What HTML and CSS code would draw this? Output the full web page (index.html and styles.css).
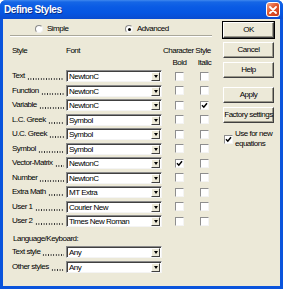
FILE: index.html
```html
<!DOCTYPE html>
<html>
<head>
<meta charset="utf-8">
<link rel="stylesheet" href="styles.css">
</head>
<body>
<div class="win">
  <div class="titlebar">
    <span class="title">Define Styles</span>
    <span class="close"><svg width="8" height="8" viewBox="0 0 8 8"><path d="M1 1L7 7M7 1L1 7" stroke="#fff" stroke-width="1.8" stroke-linecap="round"/></svg></span>
  </div>
  <div class="client">
    <div class="main">
      <div class="radios">
        <span class="radio first"><span class="rb"></span>Simple</span>
        <span class="radio"><span class="rb on"></span>Advanced</span>
      </div>
      <div class="sep"></div>
      <div class="grid head">
        <span>Style</span><span>Font</span><span class="cs">Character Style</span>
      </div>
      <div class="grid sub">
        <span class="c b">Bold</span><span class="c i">Italic</span>
      </div>

      <div class="grid row"><span class="lbl"><span>Text</span><span class="dots"></span></span><span class="combo"><span class="val">NewtonC</span><span class="dd"></span></span><span class="cb b"></span><span class="cb i"></span></div>
      <div class="grid row"><span class="lbl"><span>Function</span><span class="dots"></span></span><span class="combo"><span class="val">NewtonC</span><span class="dd"></span></span><span class="cb b"></span><span class="cb i"></span></div>
      <div class="grid row"><span class="lbl"><span>Variable</span><span class="dots"></span></span><span class="combo"><span class="val">NewtonC</span><span class="dd"></span></span><span class="cb b"></span><span class="cb i"><svg width="7" height="7" viewBox="0 0 7 7"><path d="M1 3.2L2.8 5.2L6 1.2" fill="none" stroke="#000" stroke-width="1.5"/></svg></span></div>
      <div class="grid row"><span class="lbl"><span>L.C. Greek</span><span class="dots"></span></span><span class="combo"><span class="val">Symbol</span><span class="dd"></span></span><span class="cb b"></span><span class="cb i"></span></div>
      <div class="grid row"><span class="lbl"><span>U.C. Greek</span><span class="dots"></span></span><span class="combo"><span class="val">Symbol</span><span class="dd"></span></span><span class="cb b"></span><span class="cb i"></span></div>
      <div class="grid row"><span class="lbl"><span>Symbol</span><span class="dots"></span></span><span class="combo"><span class="val">Symbol</span><span class="dd"></span></span><span class="cb b"></span><span class="cb i"></span></div>
      <div class="grid row"><span class="lbl"><span>Vector-Matrix</span><span class="dots"></span></span><span class="combo"><span class="val">NewtonC</span><span class="dd"></span></span><span class="cb b"><svg width="7" height="7" viewBox="0 0 7 7"><path d="M1 3.2L2.8 5.2L6 1.2" fill="none" stroke="#000" stroke-width="1.5"/></svg></span><span class="cb i"></span></div>
      <div class="grid row"><span class="lbl"><span>Number</span><span class="dots"></span></span><span class="combo"><span class="val">NewtonC</span><span class="dd"></span></span><span class="cb b"></span><span class="cb i"></span></div>
      <div class="grid row"><span class="lbl"><span>Extra Math</span><span class="dots"></span></span><span class="combo"><span class="val">MT Extra</span><span class="dd"></span></span><span class="cb b"></span><span class="cb i"></span></div>
      <div class="grid row"><span class="lbl"><span>User 1</span><span class="dots"></span></span><span class="combo"><span class="val">Courier New</span><span class="dd"></span></span><span class="cb b"></span><span class="cb i"></span></div>
      <div class="grid row"><span class="lbl"><span>User 2</span><span class="dots"></span></span><span class="combo"><span class="val">Times New Roman</span><span class="dd"></span></span><span class="cb b"></span><span class="cb i"></span></div>

      <div class="lang">Language/Keyboard:</div>
      <div class="grid row"><span class="lbl"><span>Text style</span><span class="dots"></span></span><span class="combo"><span class="val">Any</span><span class="dd"></span></span></div>
      <div class="grid row"><span class="lbl"><span>Other styles</span><span class="dots"></span></span><span class="combo"><span class="val">Any</span><span class="dd"></span></span></div>
    </div>
    <div class="side">
      <span class="btn def">OK</span>
      <span class="btn g4">Cancel</span>
      <span class="btn g4">Help</span>
      <span class="btn g9">Apply</span>
      <span class="btn g4">Factory settings</span>
      <div class="usenew"><span class="cb"><svg width="7" height="7" viewBox="0 0 7 7"><path d="M1 3.2L2.8 5.2L6 1.2" fill="none" stroke="#000" stroke-width="1.5"/></svg></span><span class="ut">Use for new<br>equations</span></div>
    </div>
  </div>
</div>
</body>
</html>
```

FILE: styles.css
```css
* { box-sizing: border-box; margin: 0; padding: 0; }
html, body { width: 283px; height: 289px; overflow: hidden; background: #ffffff; }
body {
  font-family: "Liberation Sans", Arial, sans-serif;
  font-size: 8px;
  letter-spacing: -0.5px;
  color: #000;
  line-height: 10px;
}
.win {
  width: 283px;
  height: 289px;
  background: #0a54dc;
  border-radius: 6px 6px 0 0;
  display: flex;
  flex-direction: column;
  overflow: hidden;
}
.titlebar {
  height: 19px;
  flex: none;
  display: flex;
  align-items: center;
  justify-content: space-between;
  padding: 0 3px 0 4px;
  background: linear-gradient(#3f88ee 0, #1566e6 2px, #0a5be4 7px, #0656e2 13px, #0a4cd0 19px);
}
.title {
  color: #fff;
  font-weight: bold;
  font-size: 10px;
  letter-spacing: -0.4px;
  text-shadow: 1px 1px #0b2f8c;
}
.close {
  width: 14px;
  height: 15px;
  border: 1px solid #fff;
  border-radius: 3px;
  background: linear-gradient(135deg, #f4a58a, #e2572c 45%, #c8391a);
  display: flex;
  align-items: center;
  justify-content: center;
}
.client {
  flex: 1;
  margin: 0 3px 3px;
  background: #ece9d8;
  display: flex;
}
.main { width: 220px; flex: none; padding-top: 4px; }
.radios { height: 12px; display: flex; align-items: center; padding-left: 32px; }
.radio { display: flex; align-items: center; gap: 4px; }
.radio.first { width: 90px; }
.rb {
  width: 8px; height: 8px; border-radius: 50%;
  background: #fff;
  border: 1px solid;
  border-color: #8a8a8a #f2f2f2 #f2f2f2 #8a8a8a;
  display: flex; align-items: center; justify-content: center;
}
.rb.on::after { content: ""; width: 3px; height: 3px; border-radius: 50%; background: #000; }
.sep {
  margin-left: 7px; width: 202px; height: 2px;
  border-top: 1px solid #a9a79a; border-bottom: 1px solid #ffffff;
}
.grid {
  display: grid;
  grid-template-columns: 54px 96px 13px 9px 16px 9px;
  padding-left: 9px;
  align-items: center;
}
.head { height: 12px; margin-top: 8px; }
.head .cs { grid-column: 3 / 7; padding-left: 1px; white-space: nowrap; }
.sub { height: 12px; }
.sub .b { grid-column: 4; }
.sub .i { grid-column: 6; }
.c { display: flex; justify-content: center; white-space: nowrap; }
.row { height: 14.5px; }
.lbl { display: flex; align-items: center; white-space: nowrap; padding-right: 2px; height: 10px; }
.dots {
  flex: 1;
  align-self: stretch;
  margin-left: 2px;
  background-image: radial-gradient(circle, #333 0.55px, transparent 0.9px);
  background-size: 2.6px 2px;
  background-position: 0 7px;
  background-repeat: repeat-x;
}
.combo {
  height: 12px;
  background: #fff;
  border: 1px solid;
  border-color: #8a8a8a #f4f4f4 #f4f4f4 #8a8a8a;
  box-shadow: inset 1px 1px #404040;
  display: flex;
  align-items: center;
  justify-content: space-between;
  padding: 1px 1px 0 2px;
}
.val { white-space: nowrap; line-height: 9px; }
.dd {
  width: 9px; height: 9px;
  background: #ece9d8;
  border: 1px solid;
  border-color: #ffffff #404040 #404040 #ffffff;
  display: flex; align-items: center; justify-content: center;
}
.dd::after {
  content: ""; width: 0; height: 0;
  border-left: 2.5px solid transparent;
  border-right: 2.5px solid transparent;
  border-top: 3px solid #000;
}
.cb {
  width: 9px; height: 9px;
  flex: none;
  background: #fff;
  border: 1px solid;
  border-color: #8e8e8e #f4f4f4 #f4f4f4 #8e8e8e;
  display: flex; align-items: center; justify-content: center;
}
.row .b { grid-column: 4; }
.row .i { grid-column: 6; }
.lang { height: 12px; margin-top: 4.5px; padding-left: 10px; display: flex; align-items: center; }
.side { width: 51px; padding-top: 3px; display: flex; flex-direction: column; }
.btn {
  height: 16px;
  background: #ece9d8;
  border: 1px solid;
  border-color: #ffffff #404040 #404040 #ffffff;
  box-shadow: inset -1px -1px #9a988a;
  display: flex; align-items: center; justify-content: center;
  white-space: nowrap;
}
.btn.def { outline: 1px solid #000; outline-offset: 0; }
.g4 { margin-top: 4px; }
.g9 { margin-top: 9px; }
.usenew { margin-top: 6px; display: flex; align-items: center; gap: 2px; padding-left: 1px; }
.ut { line-height: 10px; white-space: nowrap; }
```
